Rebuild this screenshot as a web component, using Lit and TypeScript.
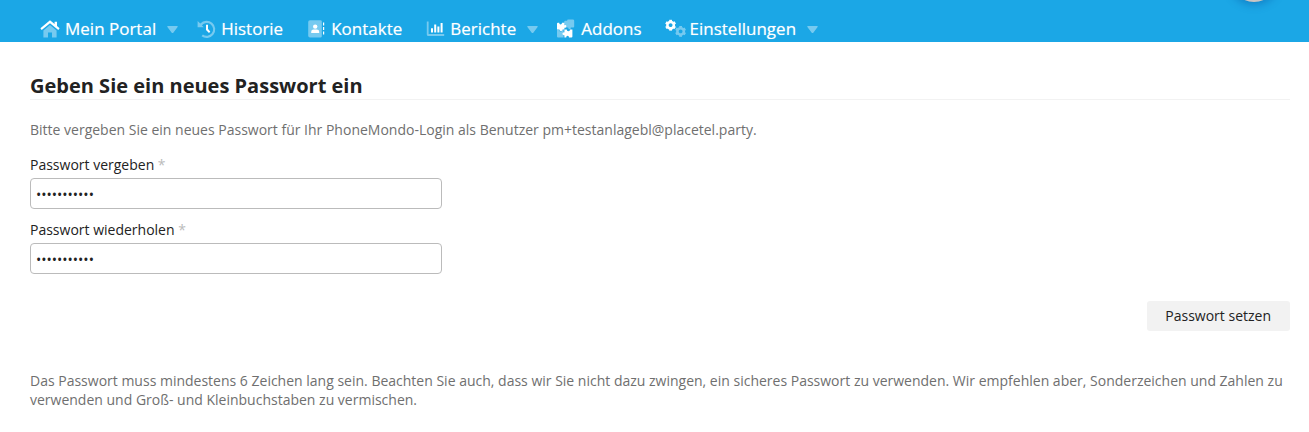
import { LitElement, html, css, svg, nothing } from "lit";
import { customElement } from "lit/decorators.js";

const home = svg`
  <path class="dim" d="M10 5 3.400 10.400V17.600H8v-5h4v5h4.600V10.400z"/>
  <path d="M10 .2.400 8.200l1.300 1.800L10 3.200l8.300 6.800 1.300-1.800L17 6V1.800h-2.400V4z"/>`;

const history = svg`
  <g transform="translate(.8 -.6)">
    <path class="dim" d="M.8 1.600v6.200h6.200L5.100 5.800A6.400 6.400 0 1 1 6.100 15.100l-1.400 1.800A8.600 8.600 0 1 0 3.500 4.200z"/>
    <path d="M9.200 5.400h2v4.300l2.300 2.300-1.300 1.500-3-3z"/>
  </g>`;

const contacts = svg`
  <path class="dim" d="M4 .2h10.400q1.400 0 1.400 1.400v14.600q0 1.400-1.400 1.400H4q-1.800 0-1.800-1.800V2Q2.200.2 4 .2z"/>
  <circle cx="9.200" cy="6.600" r="2.200"/>
  <path d="M5.200 13v-1.200q0-2.200 2.400-2.200h3.200q2.400 0 2.400 2.200V13zM17 2.400h1.200v3H17zM17 7h1.200v3H17zM17 11.600h1.200v3H17z"/>`;

const chart = svg`
  <g transform="translate(.8 -.4)">
    <path class="dim" d="M1 2h1.800v12.400H18.400v2H2.600q-1.600 0-1.600-1.600z"/>
    <path d="M5.200 8.600h2V13h-2zM8.400 4.800h2V13h-2zM11.600 7h2v6h-2zM14.800 3.400h2V13h-2z"/>
  </g>`;

const puzzle = svg`
  <path class="dim" d="M8.200 4V1.800q0-1 1-1h2q-.6-1.400 1.200-1.400h4.400q1.400 0 1.400 1.400v5.600q0 1-1 1h-2.400q.4 1.800-1.200 1.800t-1.400-1.800h-1.800q0-1.800-1.600-1.800z"/>
  <path class="dim" d="M1 9.800h1.800q-.4 1.600 1.800 1.600t2-1.600h1v2.400q2-.2 2 1.400t-2 1.400v2.400H2q-1 0-1-1z"/>
  <path d="M2 2.800h1.200q0 1.600 1.400 1.600T6 2.800h2.400v2.400q2-.6 2 1.200t-2 1.400v1.600H6.600q.2 1.600-1.600 1.600T3.400 9.400H1V3.800q0-1 1-1z"/>
  <path d="M8.400 9.400h2.400q-.2 1.800 1.600 1.800T14 9.400h2.400v7q0 1-1 1H13q0-1.600-1.400-1.600t-1.400 1.600H8.400v-2.200q-2 .2-2-1.400t2-1.400z"/>`;

// A six-toothed gear ring around the given centre.
const gear = (cx: number, cy: number, r: number, dim: boolean) => svg`
  <g class=${dim ? "ring dim" : "ring"} transform="translate(${cx} ${cy})">
    <circle r=${r} stroke-width="2.600"/>
    ${[0, 60, 120, 180, 240, 300].map(
      (a) => svg`<path transform="rotate(${a})" stroke-width="2.800" d="M0 ${-r - 0.6}v-1.600"/>`
    )}
  </g>`;

const gears = svg`${gear(5.6, 5.2, 3.2, false)}${gear(15.6, 11.4, 3.2, true)}`;

const entries = [
  { label: "Mein Portal", icon: home, menu: true },
  { label: "Historie", icon: history, menu: false },
  { label: "Kontakte", icon: contacts, menu: false },
  { label: "Berichte", icon: chart, menu: true },
  { label: "Addons", icon: puzzle, menu: false },
  { label: "Einstellungen", icon: gears, menu: true },
];

@customElement("portal-nav")
class PortalNav extends LitElement {
  static styles = css`
    :host { display: block; position: relative; overflow: hidden; background: #1ba7e6; }
    nav { display: flex; flex-wrap: wrap; padding: 16px 40px 0; }
    a {
      display: flex; align-items: center; padding-right: 23px;
      font: 500 17px/26px "Open Sans", sans-serif;
      color: #fff; text-decoration: none; white-space: nowrap;
      text-shadow: 0 0 1px rgba(255, 255, 255, 0.5);
    }
    a.menu { padding-right: 18px; }
    .icon { width: 20px; height: 18px; margin-right: 5px; fill: #fff; overflow: visible; }
    .dim { opacity: 0.4; }
    .ring { fill: none; stroke: #fff; }
    .caret { width: 11px; height: 7px; margin: 1px 0 0 11px; fill: #fff; opacity: 0.4; }
    .avatar {
      position: absolute; right: 30px; top: -48px; width: 50px; height: 50px;
      border-radius: 50%; background: #c9c5c3; box-shadow: 0 2px 10px rgba(0, 60, 140, 0.4);
    }
  `;
  render() {
    return html`
      <nav>
        ${entries.map(
          (e) => html`<a href="#" class=${e.menu ? "menu" : ""}>
            <svg class="icon" viewBox="0 0 20 18" aria-hidden="true">${e.icon}</svg>
            <span>${e.label}</span>
            ${e.menu
              ? html`<svg class="caret" viewBox="0 0 11 7" aria-hidden="true"><path d="M1 0h9q1.400 0 .6 1L6.500 6.400q-1 1-2 0L.4 1Q-.4 0 1 0z"/></svg>`
              : nothing}
          </a>`
        )}
      </nav>
      <div class="avatar"></div>
    `;
  }
}

@customElement("app-root")
class AppRoot extends LitElement {
  static styles = css`
    :host { display: block; background: #fff; font: 14px/19px "Open Sans", sans-serif; color: #222; }
    main { padding: 30px 19px 20px 30px; }
    h1 { margin: 0; font-size: 20px; line-height: 27px; font-weight: 700; border-bottom: 1px solid #f2f2f2; }
    p { margin: 0; color: #6f6f6f; }
    .intro { margin-top: 20px; }
    form { display: flex; flex-direction: column; }
    .field { display: flex; flex-direction: column; margin-top: 16px; }
    .field + .field { margin-top: 11px; }
    .star { color: #bbb; }
    input {
      box-sizing: border-box; width: 412px; max-width: 100%; height: 31px; margin: 4px 0 0; padding: 2px 5px 0;
      border: 1px solid #bbb; border-radius: 4px; background: #fff; color: #222;
      font: 14px "Open Sans", sans-serif; outline: none;
    }
    button {
      align-self: flex-end; height: 30px; margin: 27px 0 0; padding: 0 19px 2px 18px;
      border: 0; border-radius: 3px; background: #f2f2f2; color: #222;
      font: 14px "Open Sans", sans-serif;
    }
    .hint { margin-top: 40px; }
  `;
  render() {
    return html`
      <portal-nav></portal-nav>
      <main>
        <h1>Geben Sie ein neues Passwort ein</h1>
        <p class="intro">Bitte vergeben Sie ein neues Passwort für Ihr PhoneMondo-Login als Benutzer pm+testanlagebl@placetel.party.</p>
        <form @submit=${(e: Event) => e.preventDefault()}>
          <div class="field">
            <label for="password">Passwort vergeben <span class="star">*</span></label>
            <input id="password" type="password" autocomplete="new-password" value="geheimnis12" />
          </div>
          <div class="field">
            <label for="repeat">Passwort wiederholen <span class="star">*</span></label>
            <input id="repeat" type="password" autocomplete="new-password" value="geheimnis12" />
          </div>
          <button type="submit">Passwort setzen</button>
        </form>
        <p class="hint">Das Passwort muss mindestens 6 Zeichen lang sein. Beachten Sie auch, dass wir Sie nicht dazu zwingen, ein sicheres Passwort zu verwenden. Wir empfehlen aber, Sonderzeichen und Zahlen zu verwenden und Groß- und Kleinbuchstaben zu vermischen.</p>
      </main>
    `;
  }
}
